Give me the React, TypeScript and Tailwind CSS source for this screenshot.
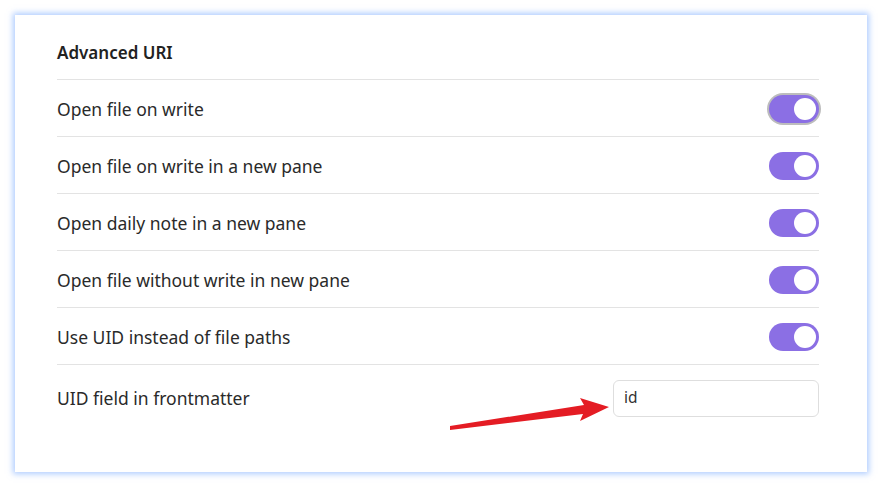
import React from "react";

const rows = [
  { label: "Open file on write", focus: true },
  { label: "Open file on write in a new pane" },
  { label: "Open daily note in a new pane" },
  { label: "Open file without write in new pane" },
  { label: "Use UID instead of file paths" },
];

function Toggle({ focus }: { focus?: boolean }) {
  return (
    <div
      className={`w-[50px] h-[28px] rounded-full bg-[#8b6fe4] flex items-center justify-end pr-[3px] ${
        focus ? "ring-2 ring-[#bdbdbd]" : ""
      }`}
    >
      <div className="w-[22px] h-[22px] rounded-full bg-white" />
    </div>
  );
}

export default function App() {
  return (
    <div
      className="w-[883px] h-[488px] bg-white p-[15px] pb-[16px]"
      style={{ fontFamily: '"Noto Sans", "Open Sans", sans-serif' }}
    >
      <div className="relative w-[852px] h-[457px] bg-white shadow-[0_0_6px_2px_rgba(120,170,255,0.6)] pl-[42px] pr-[48px] pt-[27px]">
        <div className="h-[38px] border-b border-[#e3e3e3] text-[17px] font-semibold text-[#222] leading-[22px]">
          Advanced URI
        </div>
        {rows.map((r) => (
          <div
            key={r.label}
            className="h-[57px] border-b border-[#e3e3e3] flex items-center justify-between text-[17.5px] text-[#2a2a2a] pt-[2px]"
          >
            <span>{r.label}</span>
            <Toggle focus={r.focus} />
          </div>
        ))}
        <div className="h-[66px] flex items-center justify-between text-[17.5px] text-[#2a2a2a]">
          <span>UID field in frontmatter</span>
          <div className="w-[206px] h-[37px] border border-[#dedede] rounded-[6px] flex items-center pl-[10px] text-[15.5px] text-[#333]">
            id
          </div>
        </div>
        <svg
          className="absolute left-0 top-0 pointer-events-none"
          width="852"
          height="457"
          viewBox="0 0 852 457"
        >
          <g transform="translate(-15,-15)">
            <path
              d="M450 430 L583 414 L580 421 L609 407 L580 398 L584 405 L450 426 Z"
              fill="#e41c24"
            />
          </g>
        </svg>
      </div>
    </div>
  );
}
